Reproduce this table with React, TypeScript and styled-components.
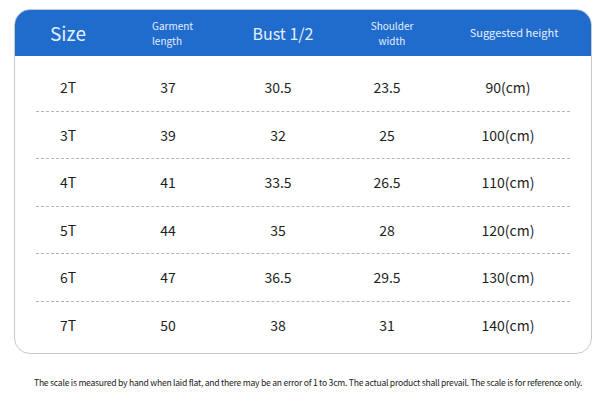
import { createGlobalStyle, styled } from 'styled-components';

const GlobalStyle = createGlobalStyle`
  html, body {
    margin: 0;
    padding: 0;
    background: #fff;
  }
  body {
    font-family: 'Noto Sans CJK SC', 'Noto Sans', sans-serif;
    color: #222;
  }
`;

const Page = styled.div`
  width: 600px;
  height: 409px;
  padding: 9px 8px 0 14px;
  box-sizing: border-box;
`;

const Card = styled.div`
  width: 578px;
  height: 345px;
  box-sizing: border-box;
  border: 1px solid #c9c9c9;
  border-radius: 16px;
  overflow: hidden;
  display: flex;
  flex-direction: column;
`;

// column widths inside the dashed row inset
const COLS = '64px 136px 84px 134px 108px';

const Header = styled.div`
  height: 47px;
  flex: 0 0 47px;
  background: #1f6ccc;
  margin: -1px -1px 0;
  padding: 0 22px;
  display: grid;
  grid-template-columns: ${COLS};
  align-items: center;
  color: #e6efff;
`;

const HeadCell = styled.div<{ $size: number; $align?: string; $shift?: number }>`
  font-size: ${(p) => p.$size}px;
  line-height: ${(p) => (p.$size <= 10 ? '15px' : '1.25')};
  text-align: ${(p) => p.$align || 'center'};
  padding-left: ${(p) => p.$shift || 0}px;
  white-space: nowrap;
  font-weight: 400;
`;

const Body = styled.div`
  padding: 8px 21px 0;
`;

const Row = styled.div<{ $last?: boolean }>`
  height: 47.5px;
  display: grid;
  grid-template-columns: ${COLS};
  align-items: center;
  border-bottom: ${(p) => (p.$last ? 'none' : '1px dashed #b5b5b5')};
  box-sizing: border-box;
`;

const Cell = styled.div`
  text-align: center;
  font-size: 14px;
  color: #1e1e1e;
`;

const Note = styled.p`
  margin: 22px 0 0 20px;
  font-size: 8.6px;
  letter-spacing: -0.25px;
  color: #222;
  white-space: nowrap;
`;

const rows = [
  ['2T', '37', '30.5', '23.5', '90(cm)'],
  ['3T', '39', '32', '25', '100(cm)'],
  ['4T', '41', '33.5', '26.5', '110(cm)'],
  ['5T', '44', '35', '28', '120(cm)'],
  ['6T', '47', '36.5', '29.5', '130(cm)'],
  ['7T', '50', '38', '31', '140(cm)'],
];

const App = () => {
  return (
    <>
      <GlobalStyle />
      <Page>
        <Card>
          <Header>
            <HeadCell $size={19}>Size</HeadCell>
            <HeadCell $size={10} $align="left" $shift={52}>
              Garment
              <br />
              length
            </HeadCell>
            <HeadCell $size={16} $shift={10}>Bust 1/2</HeadCell>
            <HeadCell $size={10} $shift={10}>
              Shoulder
              <br />
              width
            </HeadCell>
            <HeadCell $size={11} $shift={12}>Suggested height</HeadCell>
          </Header>
          <Body>
            {rows.map((r, i) => (
              <Row key={r[0]} $last={i === rows.length - 1}>
                {r.map((v, j) => (
                  <Cell key={j}>{v}</Cell>
                ))}
              </Row>
            ))}
          </Body>
        </Card>
        <Note>
          The scale is measured by hand when laid flat, and there may be an error of 1 to 3cm. The actual product shall prevail. The scale is for reference only.
        </Note>
      </Page>
    </>
  );
};

export default App;
